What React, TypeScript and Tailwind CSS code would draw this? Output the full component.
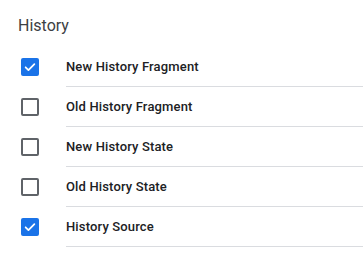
import { useState } from "react";

type Item = { label: string; checked: boolean };

const initialItems: Item[] = [
  { label: "New History Fragment", checked: true },
  { label: "Old History Fragment", checked: false },
  { label: "New History State", checked: false },
  { label: "Old History State", checked: false },
  { label: "History Source", checked: true },
];

function Checkbox({ checked, onClick }: { checked: boolean; onClick: () => void }) {
  return (
    <button
      type="button"
      onClick={onClick}
      className={
        checked
          ? "flex h-[18px] w-[18px] shrink-0 items-center justify-center rounded-[2px] bg-[#1a73e8]"
          : "flex h-[18px] w-[18px] shrink-0 items-center justify-center rounded-[2px] border-2 border-[#5f6368] bg-white"
      }
    >
      {checked && (
        <svg width="14" height="14" viewBox="0 0 24 24" fill="none">
          <path
            d="M4.5 12.5l4.8 4.8L19.5 7"
            stroke="white"
            strokeWidth="3"
            strokeLinecap="round"
            strokeLinejoin="round"
          />
        </svg>
      )}
    </button>
  );
}

export default function App() {
  const [items, setItems] = useState(initialItems);

  function toggle(i: number) {
    setItems((prev) =>
      prev.map((it, idx) => (idx === i ? { ...it, checked: !it.checked } : it))
    );
  }

  return (
    <div className="h-[264px] w-[363px] bg-white font-['Roboto',sans-serif]">
      {/* Titulo */}
      <div className="flex h-[47px] items-center pl-[18px] pt-[5px]">
        <h2 className="text-[16px] font-normal leading-6 text-[#3c4043]">History</h2>
      </div>

      <div className="flex flex-col">
        {items.map((it, i) => (
          <div key={it.label} className="flex items-center pl-[21px]">
            <Checkbox checked={it.checked} onClick={() => toggle(i)} />
            <div className="ml-[27px] flex h-10 flex-1 items-center border-b border-[#dadce0]">
              <span className="text-[13px] font-medium tracking-[0.15px] text-[#202124]">
                {it.label}
              </span>
            </div>
          </div>
        ))}
      </div>
    </div>
  );
}
